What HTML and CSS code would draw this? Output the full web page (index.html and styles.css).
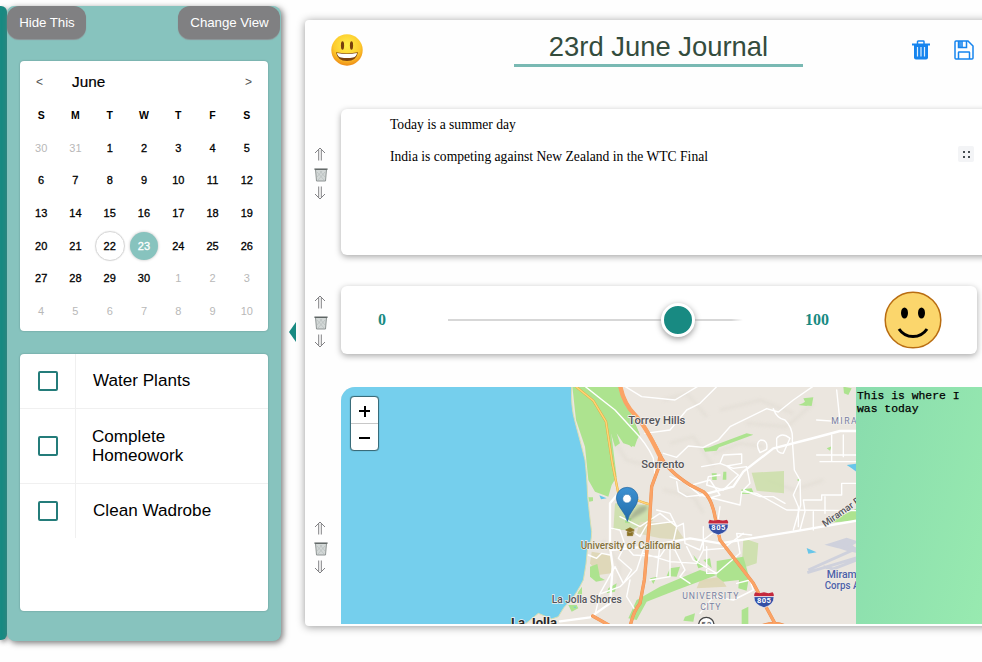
FILE: index.html
```html
<!DOCTYPE html>
<html lang="en">
<head>
<meta charset="utf-8">
<title>Journal</title>
<link rel="stylesheet" href="styles.css">
</head>
<body>
<svg class="defs" width="0" height="0">
  <symbol id="up" viewBox="0 0 12 14"><path d="M1 6L6 1L11 6M4.7 2.5V13.5M7.3 2.5V13.5"/></symbol>
  <symbol id="down" viewBox="0 0 12 14"><path d="M1 8L6 13L11 8M4.7 .5V11.5M7.3 .5V11.5"/></symbol>
  <symbol id="bin" viewBox="0 0 14 14"><path d="M1.5 1.5L2.500 13H11.500L12.5 1.5Z" fill="#d3d8d7" stroke="#858b8a" stroke-width=".9"/><path d="M3 4l7 8M6 3l5 6M11 4l-7 8M8 3l-5 6" stroke="#b2b9b8" stroke-width=".6"/><path d="M.4 1.2H13.6" stroke="#545b5a" stroke-width="1.3"/></symbol>
  <symbol id="shield" viewBox="0 0 64 48"><path d="M2 13Q0 38 32 47Q64 38 62 13Z" fill="#3450a5" stroke="#fff" stroke-width="2"/><path d="M3 13Q1 7 6 1Q18 6 32 1Q46 6 58 1Q63 7 61 13Z" fill="#c4293d"/><path d="M2 14H62" stroke="#fff" stroke-width="2"/></symbol>
</svg>
<div class="app">
  <div class="rail"></div>
  <aside class="sidebar">
    <div class="actions"><button class="pill">Hide This</button><button class="pill">Change View</button></div>
    <section class="calendar">
      <header class="month"><span class="nav">&lt;</span><span class="name">June</span><span class="nav">&gt;</span></header>
      <div class="days">
        <b>S</b><b>M</b><b>T</b><b>W</b><b>T</b><b>F</b><b>S</b>
        <i>30</i><i>31</i><span>1</span><span>2</span><span>3</span><span>4</span><span>5</span>
        <span>6</span><span>7</span><span>8</span><span>9</span><span>10</span><span>11</span><span>12</span>
        <span>13</span><span>14</span><span>15</span><span>16</span><span>17</span><span>18</span><span>19</span>
        <span>20</span><span>21</span><span class="today">22</span><span class="selected">23</span><span>24</span><span>25</span><span>26</span>
        <span>27</span><span>28</span><span>29</span><span>30</span><i>1</i><i>2</i><i>3</i>
        <i>4</i><i>5</i><i>6</i><i>7</i><i>8</i><i>9</i><i>10</i>
      </div>
    </section>
    <section class="tasks">
      <div class="task first"><div class="check"><span class="box"></span></div><p>Water Plants</p></div>
      <div class="task second"><div class="check"><span class="box"></span></div><p>Complete<br>Homeowork</p></div>
      <div class="task third"><div class="check"><span class="box"></span></div><p>Clean Wadrobe</p></div>
    </section>
  </aside>
  <div class="collapse"></div>
  <main class="journal">
    <header class="top">
      <svg class="mood" viewBox="0 0 32 32">
        <defs><radialGradient id="face" cx=".5" cy=".35" r=".65"><stop offset="0" stop-color="#fff04a"/><stop offset=".65" stop-color="#fdcb2d"/><stop offset="1" stop-color="#ee8b16"/></radialGradient></defs>
        <circle cx="16" cy="16" r="15.7" fill="url(#face)"/>
        <ellipse cx="11.5" cy="11.5" rx="1.6" ry="4.2" fill="#78400d"/><ellipse cx="20.5" cy="11.5" rx="1.6" ry="4.2" fill="#78400d"/>
        <path d="M5 18.3Q16 20.5 27 18.3Q25.5 27 16 27Q6.500 27 5 18.3Z" fill="#7c430f"/><path d="M6 19Q16 21 26 19Q25.500 22.700 22 23.500Q16 24.500 10 23.500Q6.500 22.700 6 19Z" fill="#fff"/>
      </svg>
      <h1>23rd June Journal</h1>
      <div class="tools">
        <svg width="18" height="20" viewBox="0 0 18 20" fill="none" stroke="#1684ee"><path d="M0 4.500H18" stroke-width="1.800"/><path d="M5.500 4V1.700Q5.500 1 6.200 1H11.300Q12 1 12 1.700V4" stroke-width="1.500"/><path d="M2 5H16V17.500Q16 19.500 14 19.500H4Q2 19.500 2 17.500Z" fill="#1684ee" stroke="none"/><path d="M5.500 7V16.500M9 7V16.500M12.500 7V16.500" stroke="#dceeff" stroke-width="1.200"/></svg>
        <svg width="20" height="20" viewBox="0 0 20 20" fill="none" stroke="#1684ee" stroke-width="1.500"><path d="M2 1H14L19 6V18Q19 19 18 19H2Q1 19 1 18V2Q1 1 2 1ZM4.500 1V7.500H12.500V1M4.500 19V12.500Q4.500 12 5 12H15Q15.500 12 15.500 12.500V19"/><path d="M5 1H9V7H5Z" fill="#1684ee" opacity=".8" stroke="none"/></svg>
      </div>
    </header>
    <section class="block note-block">
      <div class="controls"><svg class="arr"><use href="#up"/></svg><svg class="bin"><use href="#bin"/></svg><svg class="arr"><use href="#down"/></svg></div>
      <article class="card note"><div><p>Today is a summer day</p><p>India is competing against New Zealand in the WTC Final</p></div><div class="handle"><i></i><i></i><i></i><i></i></div></article>
    </section>
    <section class="block slider-block">
      <div class="controls"><svg class="arr"><use href="#up"/></svg><svg class="bin"><use href="#bin"/></svg><svg class="arr"><use href="#down"/></svg></div>
      <article class="card slider">
        <strong class="min">0</strong><div class="track"><span class="knob"></span></div><strong class="max">100</strong>
        <svg class="smile" viewBox="0 0 58 58"><circle cx="29" cy="29" r="27.800" fill="#fbd66c" stroke="#b96d12" stroke-width="1.500"/><ellipse cx="20.500" cy="22" rx="3.500" ry="5.500"/><ellipse cx="37.500" cy="22" rx="3.500" ry="5.500"/><path d="M15 38Q20 45.500 29 45.500Q38 45.500 43 38" fill="none" stroke="#000" stroke-width="3"/></svg>
      </article>
    </section>
    <section class="block map-block">
      <div class="controls"><svg class="arr"><use href="#up"/></svg><svg class="bin"><use href="#bin"/></svg><svg class="arr"><use href="#down"/></svg></div>
      <div class="place">
        <div class="map">
          <svg class="canvas" width="515" height="237" viewBox="0 0 515 237">
            <defs><linearGradient id="pin" x1="0" y1="0" x2="0" y2="1"><stop offset="0" stop-color="#3c91d2"/><stop offset="1" stop-color="#236ca9"/></linearGradient><filter id="soft"><feGaussianBlur stdDeviation="5"/></filter></defs>
            <rect width="515" height="237" fill="#ebe6df"/>
            <g transform="translate(219 -7) scale(.333333)">
              <g fill="none" stroke="#e0dbd2" stroke-width="9" opacity=".55" filter="url(#soft)"><path d="M310 60L380 40L440 110M330 190L400 170L460 260M480 90L600 60L700 100M560 130L680 140L760 70M460 220L540 190L610 200M620 300L700 330L790 300M160 180L200 240L270 260M310 330L400 350L430 400M130 480L180 560L170 650M330 560L440 600L560 570"/></g>
              <g fill="#c9dfa5" opacity=".8"><path d="M165 370L265 375L280 420L215 450L160 450ZM575 278L672 273V340L590 332ZM550 475L595 490L590 550L545 565Z"/><path d="M95 515L155 525V580L115 585L90 550Z" fill="#ddd5b0"/><path d="M240 425L340 430L375 480L300 475L230 460Z" fill="#dcd8b5"/><path d="M420 600L480 590L500 620L410 625Z" fill="#ddd5b0"/></g>
              <g fill="#ade38f">
                <path d="M35 0H175L200 80L238 160L224 200L190 190L150 130L170 290L155 315L145 350L105 335L85 300L75 200L48 120Z"/>
                <path d="M88 100Q120 75 140 118L165 200L180 190L170 160L215 202L240 165L205 80L175 20L150 55Z"/>
                <path d="M432 208L560 160L580 164L445 214ZM430 205L480 197L470 212L435 215ZM720 75L735 65L730 55L760 52L755 78ZM850 20L875 25L865 45L852 40ZM715 75L740 65V78ZM545 328L575 325L582 341L542 342ZM455 280H470V300H457ZM490 275H499V299H488ZM800 428L890 385V422ZM470 543L550 530L567 590L560 632L535 625L537 600L490 605L470 590Z"/>
                <path d="M205 715L230 660L300 620L420 570L470 585L350 630L260 665L230 720ZM90 560L112 552L120 592L135 600L108 605L90 590ZM55 635L66 620V643L45 660ZM195 410L215 415L210 430L195 428ZM330 565L360 560L350 590L320 588ZM270 595L290 590L280 612ZM400 525L430 560L415 565ZM430 540L450 535L455 565ZM375 710L405 700L400 725L370 722ZM545 690L565 680V735H545ZM25 675H50L55 685L35 695ZM85 352L99 352V363L88 365ZM710 300L720 295V305ZM800 205L815 199L810 212ZM145 625L170 610L165 635L140 640Z"/>
              </g>
              <path d="M-700 -10H35V20Q32 80 45 125Q60 180 75 240Q80 280 83 350Q90 420 95 455Q95 490 82 510Q80 550 70 600Q50 640 33 660Q10 680 -5 710L-25 717L-65 700L-120 745H-700Z" fill="#75cfed" stroke="#d8dfb3" stroke-width="3"/>
              <g fill="#68c6e9"><path d="M860 255L890 251V276L875 265ZM740 504L770 517L745 521ZM118 346L140 355L123 358ZM40 680L48 680L46 685Z"/></g>
              <g fill="none" stroke="#cfd1dc" stroke-width="9"><path d="M742 578L895 532M745 570L890 505M790 560L820 567L895 538"/><path d="M810 494L860 478L885 486L870 495L895 515L860 508L835 500Z" fill="#cfd1dc"/></g>
              <g fill="none" stroke="#fff" stroke-width="7" stroke-linejoin="round" stroke-linecap="round">
                <path d="M0 724L90 712L150 670L158 560L150 500V370L175 340M150 510L260 500L390 475L480 490L700 455L890 422M420 346L520 320L550 275L640 205L750 177L840 153H890"/>
              </g>
              <g fill="none" stroke="#fff" stroke-width="4.200" stroke-linejoin="round" stroke-linecap="round">
                <path d="M70 15Q120 55 165 90L220 150Q260 190 280 235L285 285M180 10L245 50L345 60L420 15M255 160L330 150L380 90L420 70L480 10M310 220L350 232L385 198L430 202L475 180L510 140L620 86L655 96L700 60L765 15M640 86Q650 115 675 120Q700 145 697 180L703 270L720 300L722 375L700 450M385 318L450 300L480 345L445 355M330 290L370 305L420 345L540 375L545 335L590 340L680 390L890 392M350 305L355 335L380 350L425 345"/>
                <path d="M105 705L120 640L165 560L190 610L215 570L175 535L195 495L180 450L155 445M85 525L110 535L125 520L150 525M125 640L180 620L230 570L250 510M180 410L240 440L300 400L350 440L370 430L375 490L420 510L430 480L470 450L480 380M210 450L240 470L260 435L340 425M190 490L220 525L300 530L320 500L345 510L375 570L360 590L390 610M290 390L330 400L350 440L340 485L300 490L290 590M380 500L400 540L470 580L540 520L530 460L575 465M430 440V510L490 505L550 460M440 500V580L470 580M420 700L460 650L520 660L580 630L570 600L530 610M250 520L330 545L410 550L430 510M330 500V590L270 600M210 600L200 650L225 690"/>
                <path d="M425 260L480 250L490 225L545 222V250L500 258L535 285L490 330L440 315L445 290L480 285M480 250L520 265L560 260L570 310L550 330L600 350L640 350L675 370M600 218Q584 190 602 180Q625 180 620 208ZM650 202V175Q665 155 690 175L670 220Q650 220 650 202Z"/>
                <path d="M720 450L735 395L730 360H785V345H845V310H890M760 450V395M720 300L700 345L715 380V440M795 350V400M770 120L840 125L830 30M780 245H890M770 225H890M815 165V245M850 165V230"/>
              </g>
              <g fill="none" stroke="#e5a63c" stroke-width="7"><path d="M48 20L100 62L138 125L157 250L175 340M230 360Q260 372 275 374"/></g>
              <g fill="none" stroke="#ffd476" stroke-width="4.500"><path d="M48 20L100 62L138 125L157 250L175 340M230 360Q260 372 275 374"/></g>
              <g fill="none" stroke="#ea8e50" stroke-linejoin="round" stroke-linecap="round">
                <path d="M180 15Q190 70 225 105Q255 135 300 225Q320 270 390 315L430 335Q455 355 465 410L480 480L580 610L650 740M300 225L295 265L275 320L268 430L253 600L240 670Q220 695 210 740M98 708L155 740M610 736Q645 725 670 736" stroke-width="10"/>
                <path d="M180 15Q190 70 225 105Q255 135 300 225Q320 270 390 315L430 335Q455 355 465 410L480 480L580 610L650 740M300 225L295 265L275 320L268 430L253 600L240 670Q220 695 210 740M98 708L155 740M610 736Q645 725 670 736" stroke="#fba365" stroke-width="8"/>
                <path d="M180 15Q190 70 225 105Q255 135 298 225" stroke="#fba365" stroke-width="13"/>
              </g>
              <use href="#shield" x="443" y="418" width="64" height="48"/><use href="#shield" x="580" y="636" width="64" height="48"/>
              <g class="route"><text x="454" y="451" textLength="42">805</text><text x="591" y="669" textLength="42">805</text></g>
              <circle cx="439" cy="735" r="23" fill="#fff" stroke="#474747" stroke-width="4"/><text x="424" y="742" class="label" font-size="23" textLength="30">52</text>
              <g class="label" font-size="32">
                <text x="205" y="132" textLength="171" lengthAdjust="spacingAndGlyphs">Torrey Hills</text><text x="244" y="264" textLength="129" lengthAdjust="spacingAndGlyphs">Sorrento</text><text x="-25" y="668" textLength="210" lengthAdjust="spacingAndGlyphs">La Jolla Shores</text>
                <text x="-147" y="741" class="town" textLength="138" lengthAdjust="spacingAndGlyphs">La Jolla</text>
                <text x="62" y="507" class="school" textLength="300" lengthAdjust="spacingAndGlyphs">University of California</text>
                <text transform="translate(795 442) rotate(-35)" font-size="29" textLength="180" lengthAdjust="spacingAndGlyphs">Miramar Road</text>
              </g>
              <g class="district"><text x="367" y="657" textLength="168">UNIVERSITY</text><text x="421" y="690" textLength="60">CITY</text><text x="814" y="132" textLength="145">MIRAMAR</text></g>
              <g class="air"><text x="800" y="594" textLength="118" lengthAdjust="spacingAndGlyphs">Miramar</text><text x="794" y="628" textLength="176" lengthAdjust="spacingAndGlyphs">Corps Airport</text></g>
              <path d="M197 450L210 443L223 450L210 457ZM202 455V467H218V455L210 460ZM221 451V463" fill="#8a7124" stroke="#8a7124" stroke-width="2"/>
              <path d="M202 425Q230 370 260 378Q270 390 225 412Z" fill="#555" opacity=".3" filter="url(#soft)"/>
              <path d="M202 424Q198 406 185 390Q169 370 169 354A32.500 32 0 0 1 234 354Q234 370 218 390Q206 406 202 424Z" fill="url(#pin)" stroke="#25679e" stroke-width="2"/><circle cx="201" cy="356" r="13" fill="#fff" stroke="#2c74b0" stroke-width="2"/>
            </g>
          </svg>
          <div class="zoom"><span class="plus"></span><span class="minus"></span></div>
        </div>
        <div class="caption">This is where I was today</div>
      </div>
    </section>
  </main>
</div>
</body>
</html>
```
FILE: styles.css
```css
* { box-sizing: border-box; }
body { margin: 0; width: 982px; height: 662px; overflow: hidden; background: #fefefe; font-family: "Liberation Sans", Arial, sans-serif; color: #000; }
p, h1 { margin: 0; }
.defs { position: absolute; }
.app { display: flex; align-items: flex-start; width: 982px; height: 662px; overflow: hidden; padding-top: 6px; }
.rail { flex: none; width: 7px; height: 634px; background: #188a82; border-radius: 0 6px 6px 0; box-shadow: 1px 2px 5px #888; }
.sidebar { flex: none; width: 274px; height: 635px; background: #87c3be; border-radius: 7px 8px 8px 8px; box-shadow: 2px 2px 6px #777; position: relative; }
.actions { display: flex; justify-content: space-between; height: 55px; align-items: flex-start; }
.pill { border: 0; height: 33px; border-radius: 12px; background: #808082; color: #fff; font: 13.3px "Liberation Sans", Arial, sans-serif; padding: 0 11px 1px 12px; box-shadow: 0 1px 1px #8d9295; white-space: nowrap; letter-spacing: -.05px; }
.pill:first-child { width: 79px; }
.pill:last-child { width: 102px; margin-right: 1px; }
.calendar, .tasks { margin-left: 13px; width: 248px; background: #fff; border-radius: 4px; box-shadow: 0 0 2px #60908d; }
.calendar { height: 270px; padding: 0 4px; }
.month { display: flex; align-items: center; height: 38px; padding: 4px 12px 0 12px; font-size: 15px; }
.month .name { flex: 1; margin-left: 29px; font-size: 15.300px; -webkit-text-stroke: .2px; }
.month .nav { font-size: 12px; color: #555; }
.days { display: grid; grid-template-columns: repeat(7, 1fr); grid-auto-rows: 32.600px; font-size: 11px; }
.days > * { display: flex; align-items: center; justify-content: center; font-style: normal; }
.days b { font-size: 10.500px; }
.days span { -webkit-text-stroke: .3px; }
.days i { color: #b8b8b8; }
.days .today, .days .selected { width: 30px; height: 30px; place-self: center; border-radius: 50%; }
.days .today { border: 1px solid #d7d7d7; box-shadow: 0 0 1px #ccc; }
.days .selected { width: 28px; height: 28px; background: #87c3be; color: #fff; box-shadow: 0 0 3px #bbb; }
.tasks { height: 257px; margin-top: 23px; }
.task { display: flex; border-bottom: 1px solid #f0f0f0; line-height: 19.500px; }
.first { height: 55px; }
.second { height: 75px; }
.third { height: 54px; border: 0; }
.check { flex: none; width: 56px; border-right: 1px solid #f0f0f0; display: flex; align-items: center; justify-content: center; }
.box { width: 20px; height: 20px; border: 2px solid #247c7a; border-radius: 2px; }
.task p { align-self: center; margin-left: 17px; font-size: 17.100px; }
.second p { margin-left: 16px; }
.collapse { flex: none; width: 0; margin: 316px 9px 0 8px; border: solid transparent; border-width: 10px 7px 10px 0; border-right-color: #188a82; }
.journal { flex: none; width: 720px; height: 606px; margin-top: 14px; background: #fefefe; border-radius: 4px; box-shadow: 0 1px 8px #999; display: flex; flex-direction: column; overflow: hidden; }
.top { width: 677px; height: 89px; flex: none; display: flex; align-items: flex-start; padding-left: 26px; }
.mood { width: 32px; height: 32px; margin-top: 14px; }
h1 { width: 289px; height: 47px; margin-left: 151px; border-bottom: 3px solid #79b9b3; text-align: center; font-weight: 400; font-size: 27.400px; line-height: 53px; color: #344c3d; white-space: nowrap; }
.tools { display: flex; gap: 24px; margin: 20px 0 0 109px; }
.tools svg { display: block; }
.block { flex: none; display: flex; align-items: center; }
.controls { width: 36px; flex: none; display: flex; flex-direction: column; padding-left: 9px; }
.arr { width: 12px; height: 14px; fill: none; stroke: #747477; stroke-width: .9; }
.bin { width: 14px; height: 14px; margin: 7px 0 4px; }
.card { background: #fff; border-radius: 6px; box-shadow: 0 2px 6px #aaa; }
.note-block { height: 146px; }
.note-block .controls { margin-bottom: 17px; }
.note { width: 690px; height: 146px; display: flex; justify-content: space-between; padding: 6px 58px 0 49px; font: 13.600px/20px "Liberation Serif", "Times New Roman", serif; }
.note p { margin-bottom: 12px; }
.handle { width: 16px; height: 16px; margin: 31px -7px 0 0; background: #f3f4f6; border-radius: 2px; display: grid; grid-template-columns: 2px 2px; grid-template-rows: 2px 2px; gap: 3px; place-content: center; }
.handle i { width: 2px; height: 2px; background: #444b50; }
.slider-block { height: 68px; margin-top: 31px; }
.slider-block .controls { margin-top: 2px; }
.slider { width: 636px; height: 68px; display: flex; align-items: center; padding-left: 37px; font-family: "Liberation Serif", serif; color: #188a82; font-size: 16px; }
.min { width: 70px; }
.track { width: 295px; height: 2px; background: linear-gradient(90deg, #d7d7d7 96%, #fff); display: flex; align-items: center; }
.knob { flex: none; width: 34px; height: 34px; margin-left: 213px; border: 3px solid #fff; border-radius: 50%; background: #188a82; box-shadow: 0 2px 6px #999; }
.max { margin-left: 62px; width: 80px; }
.smile { width: 58px; height: 58px; margin-left: -1px; }
.map-block { height: 237px; margin-top: 33px; align-items: flex-start; }
.map-block .controls { margin-top: 134px; }
.place { width: 690px; height: 237px; display: flex; border-radius: 14px 0 0; overflow: hidden; }
.map { width: 515px; height: 237px; position: relative; flex: none; }
.canvas { display: block; }
.canvas text { font-family: Roboto, sans-serif; }
.label { fill: #55555a; font-weight: 500; stroke: #f4f1ed; stroke-width: 4px; paint-order: stroke; }
.label .school { fill: #84713b; }
.label .town { fill: #262626; font-size: 37px; font-weight: 700; }
.district { fill: #777fa1; font-size: 26px; font-weight: 400; stroke: #f4f1ed; stroke-width: 3px; paint-order: stroke; }
.air { fill: #4c5fa7; font-size: 30px; font-weight: 500; stroke: #f0ede8; stroke-width: 3px; paint-order: stroke; }
.route { fill: #fff; font-size: 23px; font-weight: 700; }
.zoom { position: absolute; left: 9px; top: 9px; width: 29px; height: 55px; background: #fff; border: 1px solid #396c7a; border-radius: 4px; box-shadow: 0 0 1px #396c7a; display: grid; grid-template-rows: 1fr 1fr; }
.zoom span { display: grid; place-items: center; padding-top: 3px; }
.zoom .plus { border-bottom: 1px solid #c8c8c8; }
.zoom span::before, .plus::after { content: ""; grid-area: 1 / 1; width: 11px; height: 2px; background: #000; }
.zoom .plus::after { width: 2px; height: 11px; }
.caption { flex: none; width: 175px; padding: 3px 67px 0 1px; background: linear-gradient(105deg, #89dcad, #98eab0 80%); font: 11.400px/13px "Liberation Mono", "Courier New", monospace; -webkit-text-stroke: .25px; }
```
